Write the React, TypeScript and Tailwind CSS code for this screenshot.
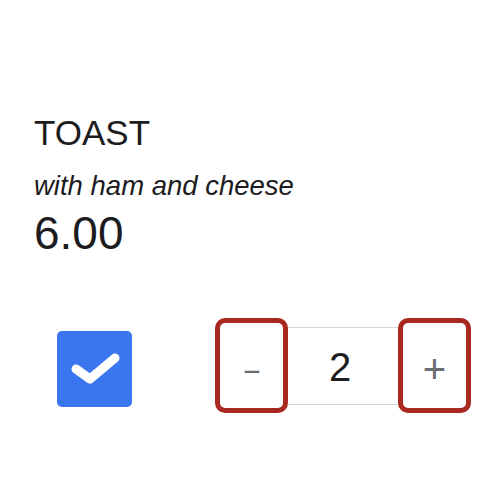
import React, { useState } from "react";

export default function App() {
    const [checked, setChecked] = useState(true);
    const [qty, setQty] = useState(2);

    return (
        <div className="w-[500px] h-[500px] bg-white font-['Liberation_Sans',Arial,sans-serif] text-[#1c1c1e]">
            <div className="pl-[34px] pt-[113px]">
                {/* Item info */}
                <h1 className="text-[35px] leading-[40px] font-normal">TOAST</h1>
                <p className="mt-[17px] text-[27.5px] leading-[32px] italic">with ham and cheese</p>
                <p className="mt-[6px] text-[46px] leading-[50px]">6.00</p>

                {/* Controls */}
                <div className="mt-[60px] flex items-start">
                    <button
                        onClick={() => setChecked(!checked)}
                        className={
                            "mt-[13px] ml-[23px] w-[75px] h-[76px] rounded-[5px] flex items-center justify-center " +
                            (checked ? "bg-[#3a76f0]" : "bg-white border-2 border-gray-300")
                        }
                    >
                        {checked && (
                            <svg width="75" height="76" viewBox="0 0 75 76">
                                <path
                                    d="M19 38 L33 48 L58 27"
                                    fill="none"
                                    stroke="white"
                                    strokeWidth="9"
                                    strokeLinecap="round"
                                    strokeLinejoin="round"
                                />
                            </svg>
                        )}
                    </button>

                    <div className="ml-[83px] flex items-center">
                        <button
                            onClick={() => setQty(Math.max(0, qty - 1))}
                            className="w-[73px] h-[95px] border-[5px] border-[#a9281f] rounded-[10px] flex items-center justify-center pt-[8px] text-[30px] text-[#6b6e75]"
                        >
                            <span className="inline-block scale-x-200">-</span>
                        </button>
                        <div className="w-[110px] h-[78px] border-y border-[#d4d7dc] flex items-center justify-center pt-[2px] pr-[6px] text-[40px] text-[#1c1c1e]">
                            {qty}
                        </div>
                        <button
                            onClick={() => setQty(qty + 1)}
                            className="w-[73px] h-[95px] border-[5px] border-[#a9281f] rounded-[10px] flex items-center justify-center pt-[6px] text-[40px] font-light text-[#6b6e75]"
                        >
                            +
                        </button>
                    </div>
                </div>
            </div>
        </div>
    );
}
